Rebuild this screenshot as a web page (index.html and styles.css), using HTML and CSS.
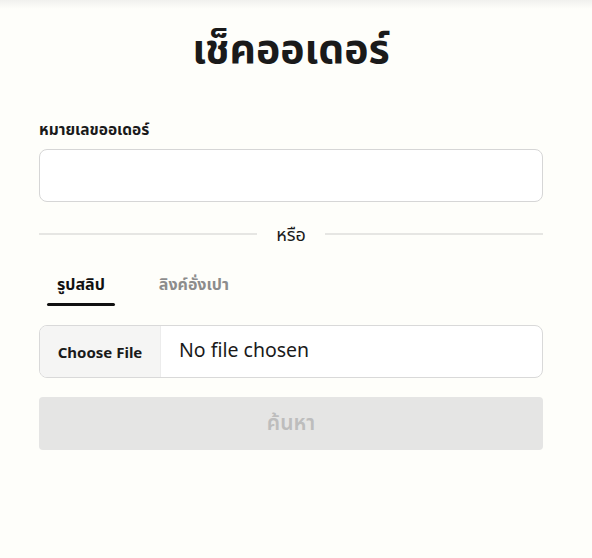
FILE: index.html
```html
<!DOCTYPE html>
<html lang="th">
<head>
<meta charset="utf-8">
<link rel="stylesheet" href="styles.css">
</head>
<body>
<div class="topshade"></div>
<main class="page">
  <h1 class="title">เช็คออเดอร์</h1>
  <label class="label">หมายเลขออเดอร์</label>
  <div class="input"></div>
  <div class="divider"><span class="line"></span><span class="or">หรือ</span><span class="line"></span></div>
  <div class="tabs">
    <div class="tab active">รูปสลิป</div>
    <div class="tab">ลิงค์อั่งเปา</div>
  </div>
  <div class="file">
    <span class="file-btn">Choose File</span>
    <span class="file-name">No file chosen</span>
  </div>
  <button class="search">ค้นหา</button>
</main>
</body>
</html>
```

FILE: styles.css
```css
* { box-sizing: border-box; }
html, body { margin: 0; padding: 0; }
body {
  background: #fefefa;
  font-family: "Noto Sans", "Noto Sans Thai", "Liberation Sans", sans-serif;
  color: #1a1a1a;
  width: 592px;
  height: 558px;
  overflow: hidden;
}
.topshade {
  height: 9px;
  background: linear-gradient(#f1f1ee, #fefefa);
}
.page {
  width: 504px;
  margin: 0 0 0 39px;
  display: flex;
  flex-direction: column;
}
.title {
  margin: 16px 0 0;
  text-align: center;
  font-size: 41px;
  line-height: 44px;
  font-weight: 700;
}
.label {
  margin-top: 49px;
  font-size: 15.5px;
  line-height: 22px;
  font-weight: 700;
}
.input {
  margin-top: 9px;
  height: 53px;
  background: #fff;
  border: 1px solid #d6d6d6;
  border-radius: 8px;
}
.divider {
  margin-top: 21px;
  display: flex;
  align-items: center;
  gap: 19px;
  height: 22px;
}
.line { flex: 1; height: 2px; background: #e6e6e3; }
.or { font-size: 18px; line-height: 22px; }
.tabs {
  margin-top: 20px;
  display: flex;
  padding-left: 8px;
}
.tab {
  font-size: 16px;
  line-height: 22px;
  font-weight: 700;
  color: #8c8c8c;
  padding: 8px 10px 11px;
  margin-right: 34px;
  position: relative;
}
.tab.active { color: #111; }
.tab.active::after {
  content: "";
  position: absolute;
  left: 0; right: 0; bottom: 0;
  height: 3px;
  border-radius: 2px;
  background: #111;
}
.file {
  margin-top: 19px;
  height: 53px;
  display: flex;
  background: #fff;
  border: 1px solid #d9d9d9;
  border-radius: 8px;
  overflow: hidden;
}
.file-btn {
  width: 121px;
  background: #f5f5f4;
  border-right: 1px solid #ececec;
  display: flex;
  align-items: center;
  justify-content: center;
  font-size: 15px;
  font-weight: 700;
  color: #1a1a1a;
}
.file-name {
  display: flex;
  align-items: center;
  padding-left: 18px;
  padding-bottom: 4px;
  font-size: 19.5px;
  color: #1a1a1a;
}
.search {
  margin-top: 19px;
  height: 53px;
  border: none;
  border-radius: 4px;
  background: #e5e5e4;
  color: #bdbdbd;
  font-family: inherit;
  font-size: 21px;
  font-weight: 600;
}
```
